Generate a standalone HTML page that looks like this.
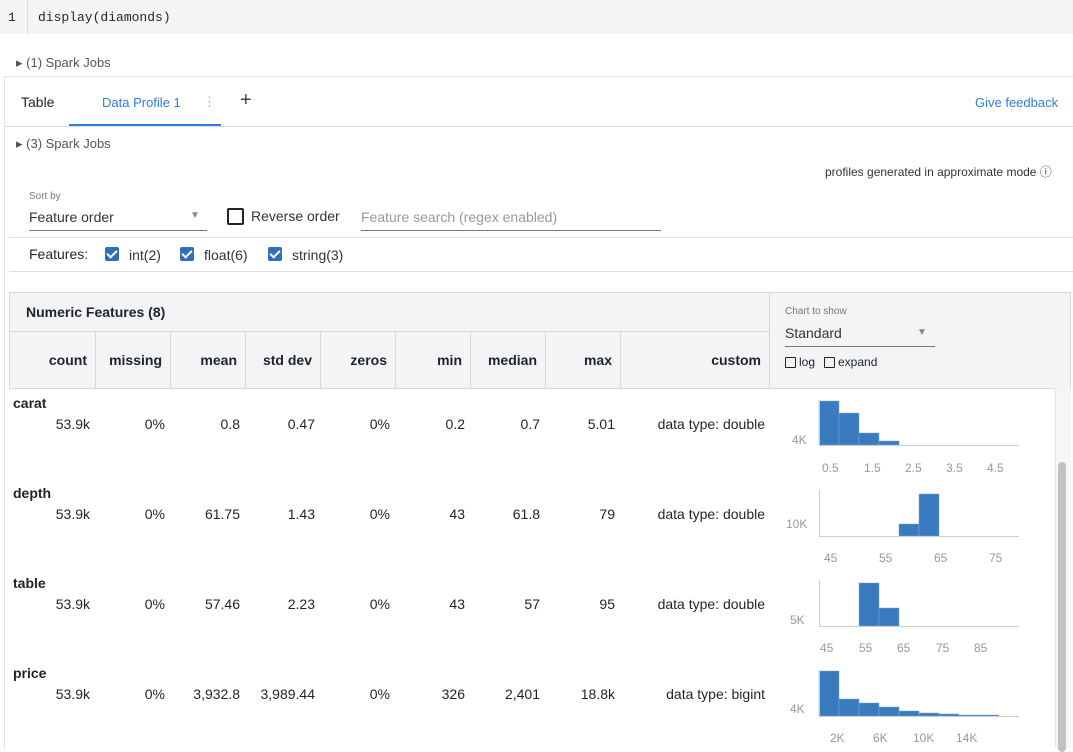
<!DOCTYPE html><html><head><style>
body{margin:0;width:1073px;height:748px;overflow:hidden;background:#fff;font-family:"Liberation Sans",sans-serif;color:#1f2328;position:relative}
.a{position:absolute;white-space:nowrap}
.num{position:absolute;width:70px;text-align:right;font-size:14px}
.hd{position:absolute;top:352px;font-weight:bold;font-size:14px;text-align:right;width:70px}
.vl{position:absolute;top:331px;height:57px;width:1px;background:#d8d8d8}
.cb{position:absolute;width:14px;height:14px;background:#2f6fb8;border-radius:2px}
.cb:after{content:"";position:absolute;left:4px;top:1px;width:4px;height:8px;border:solid #fff;border-width:0 2px 2px 0;transform:rotate(45deg)}
svg text{font-family:"Liberation Sans",sans-serif;font-size:12px;fill:#999}
</style></head><body>
<div class="a" style="left:0;top:0;width:1073px;height:34px;background:#f5f5f5"></div>
<div class="a" style="left:27px;top:0;width:1px;height:34px;background:#ddd"></div>
<div class="a" style="left:8px;top:10px;font-family:'Liberation Mono',monospace;font-size:13px">1</div>
<div class="a" style="left:38px;top:10px;font-family:'Liberation Mono',monospace;font-size:13px">display(diamonds)</div>
<div class="a" style="left:16px;top:55px;font-size:13px;color:#555">▸ (1) Spark Jobs</div>
<div class="a" style="left:4px;top:76px;width:1069px;height:672px;border-left:1px solid #e2e2e2;border-top:1px solid #e2e2e2"></div>
<div class="a" style="left:21px;top:94px;font-size:14px">Table</div>
<div class="a" style="left:102px;top:95px;font-size:13px;color:#2e7de0;font-weight:bold;font-weight:500">Data Profile 1</div>
<div class="a" style="left:203px;top:94px;font-size:13px;color:#aaa">⋮</div>
<div class="a" style="left:240px;top:89px;font-size:20px;color:#444">+</div>
<div class="a" style="left:69px;top:124px;width:152px;height:2px;background:#2e7de0"></div>
<div class="a" style="left:5px;top:126px;width:1068px;height:1px;background:#ddd"></div>
<div class="a" style="left:975px;top:95px;font-size:13px;color:#2e7de0">Give feedback</div>
<div class="a" style="left:16px;top:136px;font-size:13px;color:#555">▸ (3) Spark Jobs</div>
<div class="a" style="left:825px;top:163px;font-size:12px;color:#333">profiles generated in approximate mode ⓘ</div>
<div class="a" style="left:29px;top:191px;font-size:10px;color:#777">Sort by</div>
<div class="a" style="left:29px;top:209px;font-size:14px;color:#333">Feature order</div>
<div class="a" style="left:190px;top:210px;font-size:10px;color:#888">▼</div>
<div class="a" style="left:29px;top:230px;width:178px;height:1px;background:#777"></div>
<div class="a" style="left:227px;top:208px;width:13px;height:13px;border:2px solid #222;border-radius:2px"></div>
<div class="a" style="left:251px;top:208px;font-size:14px;color:#333">Reverse order</div>
<div class="a" style="left:361px;top:209px;font-size:14px;color:#999">Feature search (regex enabled)</div>
<div class="a" style="left:361px;top:230px;width:300px;height:1px;background:#777"></div>
<div class="a" style="left:9px;top:237px;width:1064px;height:1px;background:#ddd"></div>
<div class="a" style="left:29px;top:246px;font-size:14px">Features:</div>
<div class="cb" style="left:105px;top:247px"></div><div class="a" style="left:129px;top:247px;font-size:14px;color:#333">int(2)</div>
<div class="cb" style="left:180px;top:247px"></div><div class="a" style="left:204px;top:247px;font-size:14px;color:#333">float(6)</div>
<div class="cb" style="left:268px;top:247px"></div><div class="a" style="left:292px;top:247px;font-size:14px;color:#333">string(3)</div>
<div class="a" style="left:9px;top:271px;width:1064px;height:1px;background:#ddd"></div>
<div class="a" style="left:9px;top:292px;width:1060px;height:95px;background:#f3f4f6;border:1px solid #d8d8d8"></div>
<div class="a" style="left:10px;top:331px;width:760px;height:1px;background:#d8d8d8"></div>
<div class="a" style="left:769px;top:292px;width:1px;height:96px;background:#d8d8d8"></div>
<div class="a" style="left:26px;top:304px;font-size:14px;font-weight:bold">Numeric Features (8)</div>
<div class="vl" style="left:95px"></div><div class="vl" style="left:170px"></div><div class="vl" style="left:245px"></div><div class="vl" style="left:320px"></div><div class="vl" style="left:395px"></div><div class="vl" style="left:470px"></div><div class="vl" style="left:545px"></div><div class="vl" style="left:620px"></div>
<div class="hd" style="left:17px">count</div><div class="hd" style="left:92px">missing</div><div class="hd" style="left:167px">mean</div><div class="hd" style="left:242px">std dev</div><div class="hd" style="left:317px">zeros</div><div class="hd" style="left:392px">min</div><div class="hd" style="left:467px">median</div><div class="hd" style="left:542px">max</div><div class="hd" style="left:661px;width:100px">custom</div>
<div class="a" style="left:785px;top:306px;font-size:10px;color:#777">Chart to show</div>
<div class="a" style="left:785px;top:325px;font-size:14px;color:#333">Standard</div>
<div class="a" style="left:917px;top:327px;font-size:10px;color:#888">▼</div>
<div class="a" style="left:785px;top:346px;width:150px;height:1px;background:#777"></div>
<div class="a" style="left:785px;top:357px;width:9px;height:9px;border:1.5px solid #222;border-radius:1px"></div><div class="a" style="left:799px;top:355px;font-size:12px">log</div>
<div class="a" style="left:824px;top:357px;width:9px;height:9px;border:1.5px solid #222;border-radius:1px"></div><div class="a" style="left:838px;top:355px;font-size:12px">expand</div>
<div class="a" style="left:1055px;top:388px;width:15px;height:360px;background:#f6f6f6;border-left:1px solid #e6e6e6"></div>
<div class="a" style="left:1058px;top:462px;width:8px;height:290px;background:#c1c1c1;border-radius:4px"></div>

<div id="rows"></div>
<!-- rows -->
<div class="a" style="left:13px;top:395px;font-size:14px;font-weight:bold">carat</div>
<div class="num" style="left:20px;top:416px">53.9k</div><div class="num" style="left:95px;top:416px">0%</div><div class="num" style="left:170px;top:416px">0.8</div><div class="num" style="left:245px;top:416px">0.47</div><div class="num" style="left:320px;top:416px">0%</div><div class="num" style="left:395px;top:416px">0.2</div><div class="num" style="left:470px;top:416px">0.7</div><div class="num" style="left:545px;top:416px">5.01</div><div class="num" style="left:615px;top:416px;width:150px">data type: double</div>
<div class="a" style="left:13px;top:485px;font-size:14px;font-weight:bold">depth</div>
<div class="num" style="left:20px;top:506px">53.9k</div><div class="num" style="left:95px;top:506px">0%</div><div class="num" style="left:170px;top:506px">61.75</div><div class="num" style="left:245px;top:506px">1.43</div><div class="num" style="left:320px;top:506px">0%</div><div class="num" style="left:395px;top:506px">43</div><div class="num" style="left:470px;top:506px">61.8</div><div class="num" style="left:545px;top:506px">79</div><div class="num" style="left:615px;top:506px;width:150px">data type: double</div>
<div class="a" style="left:13px;top:575px;font-size:14px;font-weight:bold">table</div>
<div class="num" style="left:20px;top:596px">53.9k</div><div class="num" style="left:95px;top:596px">0%</div><div class="num" style="left:170px;top:596px">57.46</div><div class="num" style="left:245px;top:596px">2.23</div><div class="num" style="left:320px;top:596px">0%</div><div class="num" style="left:395px;top:596px">43</div><div class="num" style="left:470px;top:596px">57</div><div class="num" style="left:545px;top:596px">95</div><div class="num" style="left:615px;top:596px;width:150px">data type: double</div>
<div class="a" style="left:13px;top:665px;font-size:14px;font-weight:bold">price</div>
<div class="num" style="left:20px;top:686px">53.9k</div><div class="num" style="left:95px;top:686px">0%</div><div class="num" style="left:170px;top:686px">3,932.8</div><div class="num" style="left:245px;top:686px">3,989.44</div><div class="num" style="left:320px;top:686px">0%</div><div class="num" style="left:395px;top:686px">326</div><div class="num" style="left:470px;top:686px">2,401</div><div class="num" style="left:545px;top:686px">18.8k</div><div class="num" style="left:615px;top:686px;width:150px">data type: bigint</div>

<svg class="a" style="left:0;top:0" width="1073" height="748">
<g fill="#3a7bbf" stroke="#7aa8d8" stroke-width="0.5">
<rect x="819" y="401" width="20" height="44"/><rect x="839" y="413" width="20" height="32"/><rect x="859" y="433" width="20" height="12"/><rect x="879" y="441" width="20" height="4"/>
<rect x="899" y="524" width="20" height="12"/><rect x="919" y="494" width="20" height="42"/>
<rect x="859" y="583" width="20" height="43"/><rect x="879" y="608" width="20" height="18"/>
<rect x="819" y="671" width="20" height="45"/><rect x="839" y="699" width="20" height="17"/><rect x="859" y="703" width="20" height="13"/><rect x="879" y="707" width="20" height="9"/><rect x="899" y="711" width="20" height="5"/><rect x="919" y="713" width="20" height="3"/><rect x="939" y="714" width="20" height="2"/><rect x="959" y="715" width="40" height="1"/>
</g>
<g stroke="#ccc" stroke-width="1" fill="none">
<path d="M819.5 400V445.5H1019"/><path d="M819.5 490V536.5H1019"/><path d="M819.5 580V626.5H1019"/><path d="M819.5 670V716.5H1019"/>
</g>
<text x="792" y="444">4K</text><text x="822" y="472">0.5</text><text x="864" y="472">1.5</text><text x="905" y="472">2.5</text><text x="946" y="472">3.5</text><text x="987" y="472">4.5</text>
<text x="786" y="528">10K</text><text x="824" y="562">45</text><text x="879" y="562">55</text><text x="934" y="562">65</text><text x="989" y="562">75</text>
<text x="790" y="624">5K</text><text x="820" y="652">45</text><text x="859" y="652">55</text><text x="897" y="652">65</text><text x="936" y="652">75</text><text x="974" y="652">85</text>
<text x="790" y="713">4K</text><text x="830" y="742">2K</text><text x="873" y="742">6K</text><text x="913" y="742">10K</text><text x="956" y="742">14K</text>
</svg>
</body></html>
